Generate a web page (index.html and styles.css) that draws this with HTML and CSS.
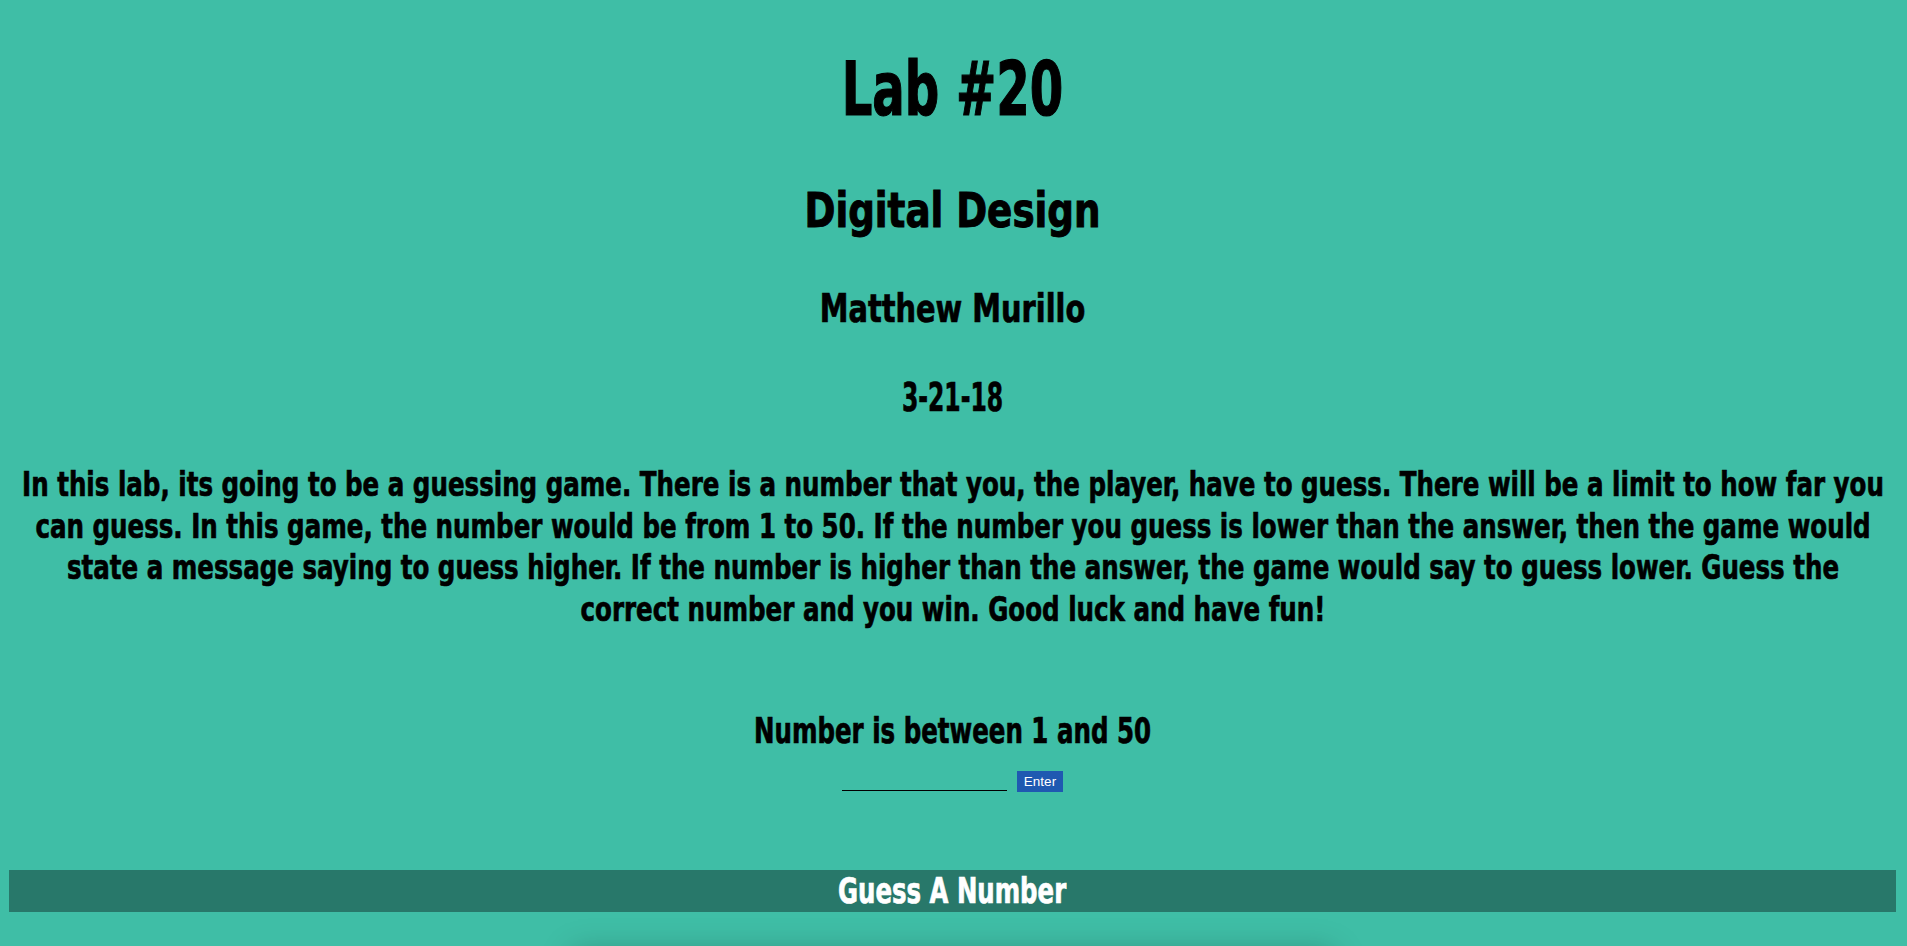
FILE: index.html
```html
<!DOCTYPE html>
<html lang="en">
<head>
<meta charset="utf-8">
<title>Lab #20</title>
<link rel="stylesheet" href="styles.css">
</head>
<body>
<main class="page">
  <h1 class="title">Lab #20</h1>
  <h2 class="course">Digital Design</h2>
  <h3 class="author">Matthew Murillo</h3>
  <h4 class="date">3-21-18</h4>
  <p class="intro">In this lab, its going to be a guessing game. There is a number that you, the player, have to guess. There will be a limit to how far you<br>can guess. In this game, the number would be from 1 to 50. If the number you guess is lower than the answer, then the game would<br>state a message saying to guess higher. If the number is higher than the answer, the game would say to guess lower. Guess the<br>correct number and you win. Good luck and have fun!</p>
  <h3 class="range">Number is between 1 and 50</h3>
  <form class="guess-form">
    <input class="guess-input" type="text" aria-label="Your guess">
    <button class="guess-btn" type="button">Enter</button>
  </form>
  <footer class="bar"><span class="bar-text">Guess A Number</span></footer>
  <div class="result-box"></div>
</main>
</body>
</html>
```

FILE: styles.css
```css
html, body {
  margin: 0;
  padding: 0;
  background: #3fbea6;
}

body {
  font-family: Impact, "Liberation Sans Narrow", "DejaVu Sans Condensed", sans-serif;
  font-weight: bold;
  color: #000;
  overflow: hidden;
  height: 946px;
}

.page {
  display: flex;
  flex-direction: column;
  align-items: stretch;
  padding: 49px 11px 0 9px;
  text-align: center;
}

.page h1, .page h2, .page h3, .page h4, .page p {
  margin: 0;
  font-weight: bold;
}

/* condensed, heavy look: squeeze glyphs horizontally around the centre */
.title, .course, .author, .date, .intro, .range, .bar-text {
  transform-origin: 50% 50%;
  -webkit-text-stroke: 0.7px currentColor;
}

.title {
  font-size: 74px;
  line-height: 80px;
  transform: scaleX(0.723);
  -webkit-text-stroke-width: 1.2px;
}

.course {
  margin-top: 53px !important;
  font-size: 48px;
  line-height: 56px;
  transform: scaleX(0.862);
  -webkit-text-stroke-width: 1px;
}

.author {
  margin-top: 49px !important;
  font-size: 38.4px;
  line-height: 44px;
  transform: scaleX(0.835);
}

.date {
  margin-top: 45px !important;
  font-size: 38.4px;
  line-height: 44px;
  transform: scaleX(0.68);
}

.intro {
  margin-top: 44px !important;
  align-self: center;
  width: 2600px;
  white-space: nowrap;
  font-size: 34.3px;
  line-height: 41.5px;
  transform: scaleX(0.795);
}

.range {
  margin-top: 81px !important;
  font-size: 35.7px;
  line-height: 40px;
  transform: scaleX(0.763);
}

.guess-form {
  margin-top: 20px;
  display: flex;
  justify-content: center;
  align-items: flex-start;
  gap: 10px;
  height: 21px;
}

.guess-input {
  width: 165px;
  height: 20px;
  box-sizing: border-box;
  margin: 0;
  padding: 0;
  border: none;
  border-bottom: 1px solid #000;
  background: transparent;
  outline: none;
}

.guess-btn {
  width: 46px;
  height: 21px;
  margin: 0;
  padding: 0;
  border: none;
  background: #1f59b1;
  color: #fff;
  font-family: "Liberation Sans", Arial, sans-serif;
  font-weight: normal;
  font-size: 13.5px;
  line-height: 21px;
}

.bar {
  margin-top: 78px;
  height: 42px;
  background: #28786a;
  color: #fff;
  font-size: 35.7px;
  line-height: 42px;
}

.bar-text {
  display: inline-block;
  transform: scaleX(0.76);
}

.result-box {
  margin: 40px auto 0;
  width: 760px;
  height: 200px;
  box-shadow: 0 0 30px rgba(0, 0, 0, 0.25);
}
```
